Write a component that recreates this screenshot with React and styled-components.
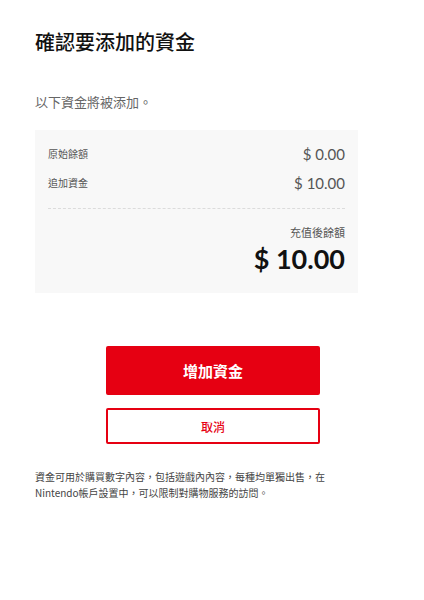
import React from "react";
import styled, { createGlobalStyle } from "styled-components";

const GlobalStyle = createGlobalStyle`
  body {
    margin: 0;
    background: #ffffff;
    font-family: "Noto Sans CJK TC", "Noto Sans", sans-serif;
  }
`;

const Page = styled.div`
  width: 424px;
  min-height: 600px;
  padding: 28px 0 40px 35px;
  box-sizing: border-box;
  background: #fff;
`;

const Column = styled.div`
  width: 323px;
  display: flex;
  flex-direction: column;
`;

const Title = styled.h1`
  margin: 0;
  font-size: 20px;
  line-height: 28px;
  font-weight: 500;
  color: #111;
`;

const Lead = styled.p`
  margin: 36px 0 0;
  font-size: 13px;
  line-height: 20px;
  color: #666;
`;

const Summary = styled.div`
  margin-top: 18px;
  background: #f8f8f8;
  padding: 9px 13px 17px;
  display: flex;
  flex-direction: column;
`;

const Row = styled.div`
  display: flex;
  justify-content: space-between;
  align-items: center;
  height: 29px;
`;

const Label = styled.span`
  font-size: 10px;
  color: #555;
`;

const Amount = styled.span`
  font-family: Lato, "Noto Sans", sans-serif;
  font-size: 15px;
  color: #555;
`;

const Divider = styled.div`
  margin: 11px 0 13px;
  border-top: 1px dashed #dcdcdc;
`;

const TotalLabel = styled.div`
  text-align: right;
  font-size: 11px;
  line-height: 20px;
  color: #555;
`;

const Total = styled.div`
  text-align: right;
  font-family: Lato, "Noto Sans", sans-serif;
  font-size: 27px;
  line-height: 34px;
  font-weight: 700;
  color: #111;
`;

const Actions = styled.div`
  margin-top: 53px;
  padding-left: 71px;
  display: flex;
  flex-direction: column;
  gap: 13px;
`;

const Button = styled.button`
  width: 214px;
  height: ${(p) => (p.$primary ? 49 : 36)}px;
  box-sizing: border-box;
  border: 2px solid #e60012;
  border-radius: 2px;
  background: ${(p) => (p.$primary ? "#e60012" : "#fff")};
  color: ${(p) => (p.$primary ? "#fff" : "#e60012")};
  font-family: "Noto Sans CJK TC", sans-serif;
  font-size: ${(p) => (p.$primary ? 15 : 12)}px;
  font-weight: ${(p) => (p.$primary ? 700 : 500)};
  cursor: pointer;
`;

const Note = styled.p`
  margin: 25px 0 0;
  font-size: 10px;
  line-height: 16px;
  color: #444;
`;

export default function App() {
  return (
    <>
      <GlobalStyle />
      <Page>
        <Column>
          <Title>確認要添加的資金</Title>
          <Lead>以下資金將被添加。</Lead>
          <Summary>
            <Row>
              <Label>原始餘額</Label>
              <Amount>$ 0.00</Amount>
            </Row>
            <Row>
              <Label>追加資金</Label>
              <Amount>$ 10.00</Amount>
            </Row>
            <Divider />
            <TotalLabel>充值後餘額</TotalLabel>
            <Total>$ 10.00</Total>
          </Summary>
          <Actions>
            <Button $primary>增加資金</Button>
            <Button>取消</Button>
          </Actions>
          <Note>
            資金可用於購買數字內容，包括遊戲內內容，每種均單獨出售，在Nintendo帳戶設置中，可以限制對購物服務的訪問。
          </Note>
        </Column>
      </Page>
    </>
  );
}
